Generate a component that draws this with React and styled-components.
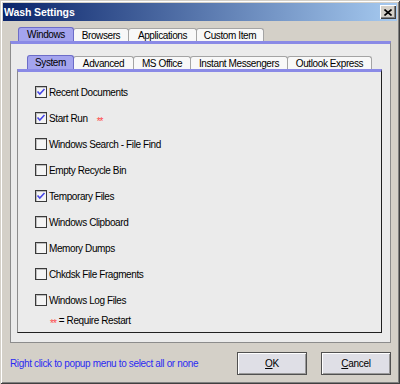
import React from "react";
import styled, { createGlobalStyle } from "styled-components";

const GlobalStyle = createGlobalStyle`
  html, body { margin: 0; padding: 0; background: #D4D0C8; }
  body { font-family: "Liberation Sans", Arial, sans-serif; }
  * { box-sizing: border-box; }
`;

const Window = styled.div`
  width: 400px;
  height: 384px;
  padding: 3px;
  display: flex;
  flex-direction: column;
  background: #d4d0c8;
  box-shadow: inset 1px 1px #d4d0c8, inset -1px -1px #404040,
    inset 2px 2px #ffffff, inset -2px -2px #808080;
`;

const TitleBar = styled.div`
  height: 18px;
  flex: none;
  display: flex;
  align-items: center;
  justify-content: space-between;
  padding: 0 1px 0 1px;
  background: linear-gradient(to right, #0a246a, #a6caf0);
`;

const Title = styled.span`
  color: #ffffff;
  font-weight: bold;
  font-size: 10.5px;
  letter-spacing: -0.1px;
`;

const CloseButton = styled.div`
  width: 16px;
  height: 14px;
  display: flex;
  align-items: center;
  justify-content: center;
  background: #d4d0c8;
  box-shadow: inset 1px 1px #ffffff, inset -1px -1px #404040,
    inset -2px -2px #808080;
`;

const Body = styled.div`
  flex: 1;
  display: flex;
  flex-direction: column;
  padding: 6px 6px 0 7px;
`;

const TabStrip = styled.div`
  display: flex;
  align-items: flex-end;
  height: 14px;
  flex: none;
  padding-left: ${(p) => p.$indent}px;
`;

const Tab = styled.div`
  width: ${(p) => p.$w}px;
  height: ${(p) => (p.$active ? 14 : 13)}px;
  margin-left: -1px;
  display: flex;
  align-items: center;
  justify-content: center;
  font-size: 10px;
  letter-spacing: -0.4px;
  color: #000;
  border: 1px solid ${(p) => (p.$active ? "#6c6cc8" : "#a4a4a4")};
  border-bottom: none;
  border-radius: 3px 3px 0 0;
  background: ${(p) => (p.$active ? "#a4a4ee" : "#f8f8f8")};
  position: relative;
  z-index: ${(p) => (p.$active ? 1 : 0)};
  &:first-child { margin-left: 0; }
`;

const OuterPanel = styled.div`
  height: 302px;
  flex: none;
  display: flex;
  flex-direction: column;
  background: #ebebeb;
  border: 1px solid #8c8c8c;
  border-top: 3px solid #8a8ae6;
  padding: 11px 8px 9px 6px;
`;

const InnerPanel = styled.div`
  height: 264px;
  flex: none;
  display: flex;
  flex-direction: column;
  background: #ebebeb;
  border-left: 1px solid #8c8c8c;
  border-right: 1px solid #202020;
  border-bottom: 1px solid #202020;
  border-top: 3px solid #8a8ae6;
  padding: 7px 0 0 17px;
`;

const List = styled.div`
  display: flex;
  flex-direction: column;
`;

const Row = styled.div`
  height: 26px;
  display: flex;
  align-items: center;
`;

const Box = styled.div`
  width: 12px;
  height: 12px;
  flex: none;
  display: flex;
  align-items: center;
  justify-content: center;
  background: #f4f4f4;
  border: 1px solid #3a3a3a;
  box-shadow: inset 1px 1px #bdbdbd;
  margin-right: 2px;
`;

const Label = styled.span`
  font-size: 10px;
  letter-spacing: -0.4px;
  color: #000;
`;

const Star = styled.span`
  color: #ff4a4a;
  font-size: 10px;
  letter-spacing: -1px;
  margin-left: ${(p) => p.$ml}px;
  margin-top: 6px;
`;

const Legend = styled.div`
  height: 14px;
  display: flex;
  align-items: center;
  padding-left: 15px;
  gap: 3px;
`;

const Footer = styled.div`
  display: flex;
  align-items: center;
  justify-content: space-between;
  padding-top: 9px;
`;

const Hint = styled.span`
  font-size: 10px;
  letter-spacing: -0.35px;
  color: #2b2bf2;
`;

const Buttons = styled.div`
  display: flex;
  gap: 14px;
`;

const Button = styled.div`
  width: 70px;
  height: 23px;
  display: flex;
  align-items: center;
  justify-content: center;
  font-size: 10px;
  letter-spacing: -0.3px;
  color: #000;
  background: #dfdfe6;
  border: 1px solid #505050;
  box-shadow: inset 1px 1px #ffffff, inset -1px -1px #9a9a9a;
  u { text-decoration: underline; }
`;

const Check = ({ checked }) => (
  <Box>
    {checked && (
      <svg width="10" height="10" viewBox="0 0 10 10">
        <polyline
          points="1.5,4.5 3.8,7 8.5,2"
          fill="none"
          stroke="#4646e6"
          strokeWidth="1.6"
        />
      </svg>
    )}
  </Box>
);

const outerTabs = [
  { t: "Windows", w: 56, a: true },
  { t: "Browsers", w: 56 },
  { t: "Applications", w: 69 },
  { t: "Custom Item", w: 68 },
];

const innerTabs = [
  { t: "System", w: 47, a: true },
  { t: "Advanced", w: 61 },
  { t: "MS Office", w: 58 },
  { t: "Instant Messengers", w: 98 },
  { t: "Outlook Express", w: 85 },
];

const items = [
  { t: "Recent Documents", c: true },
  { t: "Start Run", c: true, r: true },
  { t: "Windows Search - File Find" },
  { t: "Empty Recycle Bin" },
  { t: "Temporary Files", c: true },
  { t: "Windows Clipboard" },
  { t: "Memory Dumps" },
  { t: "Chkdsk File Fragments" },
  { t: "Windows Log Files" },
];

export default function App() {
  return (
    <>
      <GlobalStyle />
      <Window>
        <TitleBar>
          <Title>Wash Settings</Title>
          <CloseButton>
            <svg width="8" height="7" viewBox="0 0 8 7">
              <path d="M0.5 0.5 L7.5 6.5 M7.5 0.5 L0.5 6.5" stroke="#000" strokeWidth="1.6" />
            </svg>
          </CloseButton>
        </TitleBar>
        <Body>
          <TabStrip $indent={8}>
            {outerTabs.map((o) => (
              <Tab key={o.t} $w={o.w} $active={o.a}>{o.t}</Tab>
            ))}
          </TabStrip>
          <OuterPanel>
            <TabStrip $indent={10}>
              {innerTabs.map((o) => (
                <Tab key={o.t} $w={o.w} $active={o.a}>{o.t}</Tab>
              ))}
            </TabStrip>
            <InnerPanel>
              <List>
                {items.map((it) => (
                  <Row key={it.t}>
                    <Check checked={it.c} />
                    <Label>{it.t}</Label>
                    {it.r && <Star $ml={9}>**</Star>}
                  </Row>
                ))}
              </List>
              <Legend>
                <Star $ml={0}>**</Star>
                <Label>= Require Restart</Label>
              </Legend>
            </InnerPanel>
          </OuterPanel>
          <Footer>
            <Hint>Right click to popup menu to select all or none</Hint>
            <Buttons>
              <Button><u>O</u>K</Button>
              <Button><u>C</u>ancel</Button>
            </Buttons>
          </Footer>
        </Body>
      </Window>
    </>
  );
}
